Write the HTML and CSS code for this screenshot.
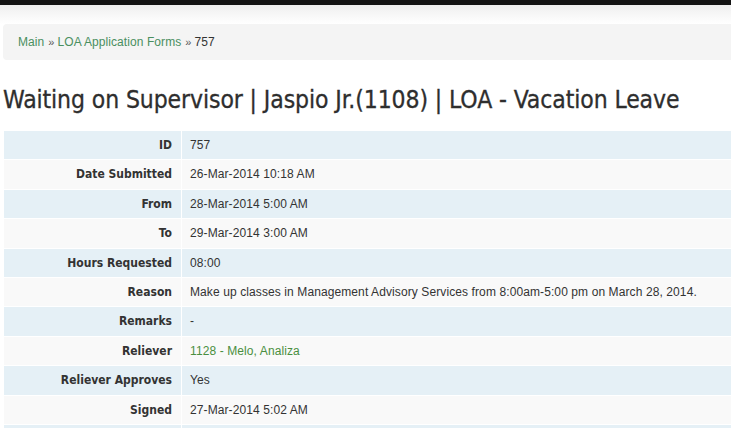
FILE: index.html
```html
<!DOCTYPE html>
<html>
<head>
<meta charset="utf-8">
<link rel="stylesheet" href="styles.css">
</head>
<body>
<div class="topbar"></div>
<div class="shade"></div>
<div class="container">
  <ul class="breadcrumb">
    <li><a href="#">Main</a><span class="sep">»</span></li>
    <li><a href="#">LOA Application Forms</a><span class="sep">»</span></li>
    <li class="active">757</li>
  </ul>
  <h1 class="title">Waiting on Supervisor | Jaspio Jr.(1108) | LOA - Vacation Leave</h1>
  <table class="details">
    <tr><th>ID</th><td>757</td></tr>
    <tr><th>Date Submitted</th><td>26-Mar-2014 10:18 AM</td></tr>
    <tr><th>From</th><td>28-Mar-2014 5:00 AM</td></tr>
    <tr><th>To</th><td>29-Mar-2014 3:00 AM</td></tr>
    <tr><th>Hours Requested</th><td>08:00</td></tr>
    <tr><th>Reason</th><td>Make up classes in Management Advisory Services from 8:00am-5:00 pm on March 28, 2014.</td></tr>
    <tr><th>Remarks</th><td>-</td></tr>
    <tr><th>Reliever</th><td><a href="#">1128 - Melo, Analiza</a></td></tr>
    <tr><th>Reliever Approves</th><td>Yes</td></tr>
    <tr><th>Signed</th><td>27-Mar-2014 5:02 AM</td></tr>
    <tr><th>&nbsp;</th><td>&nbsp;</td></tr>
  </table>
</div>
</body>
</html>
```
FILE: styles.css
```css
html, body {
  margin: 0;
  padding: 0;
  background: #fff;
  overflow: hidden;
  width: 731px;
  height: 428px;
}
body {
  font-family: "Liberation Sans", Arial, sans-serif;
  font-size: 12px;
  color: #333;
}
.topbar {
  height: 5px;
  background: #141414;
}
.shade {
  height: 19px;
  background: linear-gradient(#efefef, #fff);
}
.container {
  width: 940px;
  margin-left: 3px;
}
.breadcrumb {
  list-style: none;
  margin: 0;
  padding: 8px 15px;
  line-height: 20px;
  background: #f4f4f4;
  border-radius: 4px;
  display: flex;
  letter-spacing: 0.08px;
}
.breadcrumb a {
  color: #4a8f5f;
  text-decoration: none;
}
.breadcrumb .sep {
  padding: 0 3px 0 4px;
  color: #555;
  font-size: 11px;
}
.breadcrumb .active {
  color: #333;
}
.title {
  font-family: "DejaVu Sans Condensed", "DejaVu Sans", sans-serif;
  font-weight: normal;
  font-size: 24.5px;
  line-height: 30px;
  color: #2e2e2e;
  margin: 25px 0 0 0;
  height: 45px;
  letter-spacing: -0.1px;
  -webkit-text-stroke: 0.3px #2e2e2e;
}
.details {
  border-collapse: collapse;
  width: 100%;
  margin-left: 1px;
}
.details th,
.details td {
  padding: 5px 8px;
  line-height: 18.4px;
  border-top: 1px solid #fff;
  vertical-align: top;
}
.details td {
  letter-spacing: 0.1px;
}
.details th {
  width: 160px;
  text-align: right;
  padding-right: 9px;
  font-family: "DejaVu Sans Condensed", "DejaVu Sans", sans-serif;
  font-weight: bold;
  font-size: 12px;
  color: #333;
  border-right: 1px solid #fff;
}
.details tr:nth-child(odd) {
  background: #e5f0f6;
}
.details tr:nth-child(even) {
  background: #f9f9f9;
}
.details td a {
  color: #4a8f3f;
  text-decoration: none;
}
```
